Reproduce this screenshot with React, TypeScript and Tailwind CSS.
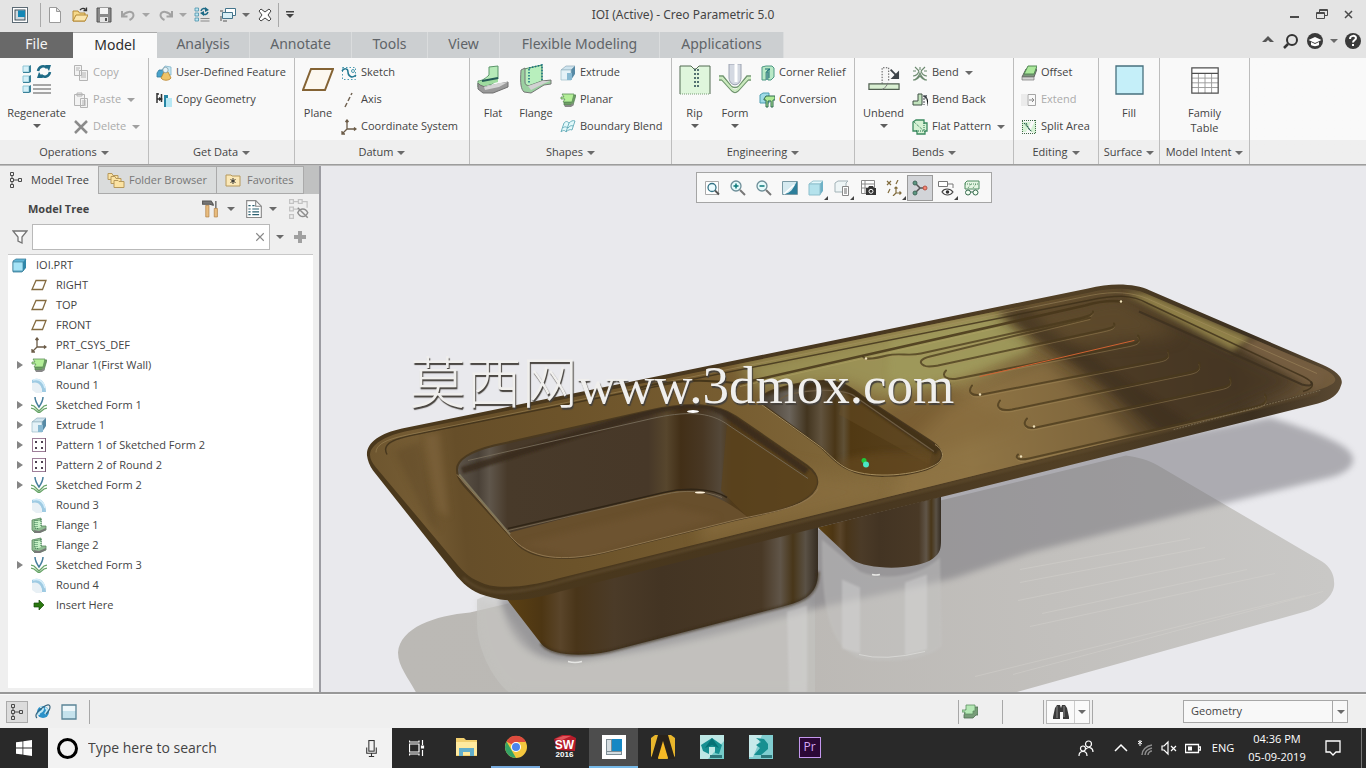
import React from "react";
import type { ReactNode } from "react";

const G = "#4a4a4a";

const art: Record<string, ReactNode> = {
  app: <><rect x=".5" y=".5" width="15" height="15" fill="#fff" stroke="#5c6b75" /><rect x="3" y="3" width="10" height="10" fill="#cfd8dd" stroke="#3c4c56" /><rect x="6" y="3.5" width="7" height="6.5" fill="#1487b5" /></>,
  newDoc: <path d="M2.500.5h7l4 4v11h-11zM9.500.5v4h4" fill="#fff" stroke="#9a9a9a" />,
  open: <><path d="M1 14V4h5l1.500 2H13v8z" fill="#f6d98a" stroke="#b58a35" /><path d="M1 14l3-6h12l-3 6z" fill="#fbe6ae" stroke="#b58a35" /><path d="M8 3c2-2 4-2 5.500-.5M14.500.5v3h-3" fill="none" stroke="#333" strokeWidth="1.300" /></>,
  save: <><path d="M1 1h14v14H1z" fill="#8a8a8a" stroke="#555" /><path d="M4 1h8v6H4z" fill="#f4f4f4" /><path d="M4 10h8v5H4z" fill="#e4e4e4" /><path d="M9 11h2v3H9z" fill="#555" /></>,
  undo: <path d="M2 4v5.500h5.500M2.500 9C5 4.500 13 3 13.500 8c0 3-2 4-4 5" fill="none" stroke="#a2a2a2" strokeWidth="2" />,
  redo: <path d="M14 4v5.500H8.500M13.500 9C11 4.500 3 3 2.500 8c0 3 2 4 4 5" fill="none" stroke="#a2a2a2" strokeWidth="2" />,
  regen: <><g fill="#bfe6f2" stroke="#4a93ab" strokeWidth=".8"><path d="M1 1h3.500v3H1zM1 6h3.500v3H1zM1 11h3.500v3H1z" /></g><path d="M6.500 11.500h9M6.500 14h9" stroke="#888" /><path d="M7 4c1-3 4-3 5-1.500M14 5c-1 3-4 3-5 1.500" fill="none" stroke="#1d6a86" strokeWidth="1.500" /><path d="M11 0l4 3-4 2zM10 4L6 6l4 3z" fill="#1d6a86" /></>,
  windows: <g fill="#fff" stroke="#44758c"><path d="M5.500 1.500h10v7h-10z" /><path d="M2.500 5.500h10v6h-10z" fill="#d9eff6" /><path d="M3 14h4M0 4h3M1 9v5" stroke="#555" /></g>,
  closeWin: <path d="M2 4l2-2 4 3 4-3 2 2-3 4 3 4-2 2-4-3-4 3-2-2 3-4z" fill="#fff" stroke="#444" />,
  regenBig: <><g fill="#d5f0f8" stroke="#8fc6d6"><path d="M2 2h6v6H2zM2 12h6v6H2zM2 22h6v6H2z" /></g><g fill="#3a8199"><path d="M8 2l2-1v7l-2 1zM8 12l2-1v7l-2 1zM8 22l2-1v7l-2 1zM2 8h7l-1 1H2zM2 18h7l-1 1H2zM2 28h7l-1 1H2z" /></g><path d="M12 21h18M12 25h18M12 29h18" stroke="#8a8a8a" strokeWidth="1.500" /><path d="M17 7c1-5 6-6 9-3M29 8c-1 5-6 6-9 3" fill="none" stroke="#1d6a86" strokeWidth="2.500" /><path d="M24 1h6l-2 6zM22 14h-6l2-6z" fill="#1d6a86" /></>,
  copy: <g fill="#f3f3f3" stroke="#b4b4b4"><path d="M1.500.5h7v10h-7zM6.500 5.500h8v10h-8z" /><path d="M3 3h4M3 5h3M8 8h5M8 10h5M8 12h5" /></g>,
  paste: <g fill="#f3f3f3" stroke="#b4b4b4"><path d="M1.500 2.500h10v11h-10zM4 1h5v3H4zM7.500 6.500h7v9h-7z" /><path d="M9 9h4M9 11h4M9 13h4" /></g>,
  del: <path d="M2 2l12 12M14 2L2 14" stroke="#8b8b8b" strokeWidth="2.500" />,
  udf: <><path d="M6 5l3-4 6 1v8H6z" fill="#c8e8f4" stroke="#7fb3c8" strokeWidth=".8" /><path d="M1 8l2-3h5v7H1z" fill="#4aa3cb" stroke="#347c9d" strokeWidth=".8" /><path d="M5 13l3-6h4l3 6c-2 3-8 3-10 0z" fill="#efc468" stroke="#b98328" strokeWidth=".8" /><circle cx="9.500" cy="5" r="2.700" fill="#e8f4f8" stroke="#7d9aa6" strokeWidth=".8" /></>,
  copyGeo: <><path d="M1 1v10M5.500 2v8M1 2h2M1 7h3" stroke="#333" strokeWidth="1.500" fill="none" /><path d="M3 5l4 2-4 2z" fill="#333" /><path d="M8 3h4v4l-2 8H8z" fill="#2786a5" /><path d="M10 6h6v9h-6z" fill="#b7e8f4" /></>,
  planeBig: <path d="M9 5h22l-8 21H1z" fill="#fcf8ef" stroke="#846334" strokeWidth="2" />,
  plane: <path d="M5 3.500h10L11.500 12.500H1z" fill="none" stroke="#846b40" strokeWidth="1.300" />,
  sketch: <><rect x="1.500" y="2.500" width="13" height="12" fill="none" stroke="#4d9bb0" strokeDasharray="1.500 2" /><path d="M1 6c2-3 6-3 6 1s4 7 8 3" stroke="#217791" strokeWidth="1.500" fill="none" /><circle cx="12" cy="6" r="1.500" fill="none" stroke="#4d9bb0" /></>,
  axis: <path d="M4 15l2-4M7 9l2-4M10 3l1-2" stroke="#726352" strokeWidth="1.500" />,
  csys: <g fill="none" stroke="#6b5b47" strokeWidth="1.300"><path d="M6 1v9h9M6 10l-5 5M4.500 3L6 1l1.500 2M13 8.500l2 1.500-2 1.500M1 12v3h3" /></g>,
  flat: <><path d="M1 17c4 0 8-3 11-6V3l9-1v13l-6 5-14 3z" fill="#b6eab8" stroke="#5b956a" /><path d="M4 17l17-3v4L7 22H1v-3z" fill="#9fdb9f" /><path d="M5 17l16-3" stroke="#235b55" strokeWidth="2" /><path d="M1 19v6l5 4h10l15-6v-5l-9 2-14 3-5-2z" fill="#999" stroke="#707070" /><path d="M7 23l15-4 9-1-9 5-14 3z" fill="#d4d4d4" /></>,
  flange: <><path d="M4 5l18-4v16l-14 5-5-3z" fill="#b8efbd" stroke="#579263" /><path d="M1 6l4-2v14c0 4 4 4 7 3l10-4 9-1v4l-7 1-13 8-7-1c-3-3-4-8-3-22z" fill="#9bd0a1" stroke="#767676" /><path d="M8 22l14-5h8l-7 3-12 6z" fill="#d2d2d2" /><path d="M9 5v14M9 4l13-3v15" fill="none" stroke="#147080" strokeWidth="1.500" strokeDasharray="1.500 1.500" /></>,
  extrude: <><path d="M1 5l5-4h9l-4 4z" fill="#cfe4ee" stroke="#8caab9" strokeWidth=".7" /><path d="M11 5l4-4v8l-4 6z" fill="#5689a5" /><path d="M1 5h10v10H1z" fill="#e5f2f8" stroke="#9cbbc9" strokeWidth=".7" /><path d="M7 8h5v7H7z" fill="#88b9d2" /></>,
  planar: <><path d="M13 3h3l-3 10H4v-3h7z" fill="#6f9f66" stroke="#527b50" strokeWidth=".7" /><path d="M2 2h12l-2 8H3l2-3H1V5h3z" fill="#b4ef98" stroke="#5d9158" strokeWidth=".8" /><path d="M12 11l2 2-3 2H5l-1-2h7z" fill="#888" /></>,
  blend: <path d="M1 13L4 4c2-2 3-2 5 0 2-2 4-3 6-2l-3 9c-2-1-4 0-6 2-1-2-3-2-5 0zM9 4l-3 9M3 9c2-2 3-1 5 0 2-2 3-3 5-2" fill="#e1f8fa" stroke="#61a9b7" strokeWidth=".9" />,
  rip: <><path d="M1 2h11l3 3h2l3-3h11v28H1z" fill="#dff6dc" /><path d="M1 30V2h11l3 3h2l3-3h11v28" fill="none" stroke="#536b53" /><path d="M1 30h30" stroke="#789b76" strokeDasharray="1 1" /><path d="M16 5v20M19 5v18" stroke="#26464e" strokeWidth="1.500" strokeDasharray="2 2" /></>,
  form: <><path d="M10 0h12v14c-1 9-11 9-12 0z" fill="#d4d9e2" stroke="#9ba2b0" /><path d="M17 0v18" stroke="#fff" strokeWidth="3" /><path d="M0 12h4l8 10c2 2 6 2 8 0l8-10h4M0 16h3l10 11c2 2 4 2 6 0l10-11h3" fill="none" stroke="#70966e" strokeWidth="1.500" /><path d="M0 14h3l10 11c2 2 4 2 6 0l10-11h3" fill="none" stroke="#caebbd" strokeWidth="2" /></>,
  corner: <><path d="M3 2l4-1h6l2 2v9l-3 3H9V7H7v8H3z" fill="#b9e9c6" stroke="#4d9783" /><path d="M6 4h5l-3 2v9M10 4v9" stroke="#176b73" fill="none" /></>,
  convert: <><path d="M1 3l3-2h6v10H1z" fill="#9fdbe7" stroke="#4c9db0" /><path d="M5 7l2-3h9v4h-2v7h-2V9h-3v6H7V8H5z" fill="#afea95" stroke="#2c6850" /></>,
  unbend: <><path d="M15 20V3h7v14" fill="#f6f6f6" stroke="#484848" strokeDasharray="1.500 1.500" /><path d="M1 20h32v6H1z" fill="#d9efd2" stroke="#505f50" strokeWidth="1.300" /><path d="M15 26c4-2 5-4 6-7" fill="none" stroke="#777" /><path d="M24 5l6 6" stroke="#3d4349" strokeWidth="2" /><path d="M33 6v9h-9z" fill="#3d4349" /></>,
  bend: <path d="M1 15c3 0 6-4 7-7 1 3 4 7 7 7M1 11c3 0 5-2 6-5M15 11c-3 0-5-2-6-5M3 2l4 4M13 2L9 6M1 6h3M12 6h3M8 2v3M3 15c3-1 4-3 5-4 1 1 2 3 5 4" fill="none" stroke="#6d8b70" strokeWidth="1.100" />,
  bendBack: <><path d="M1 9h5V2h4v11H1z" fill="#c2e3bd" stroke="#3f5145" /><path d="M12 3v10M14 5l2 3v6" stroke="#3d4349" strokeDasharray="2 1" /><path d="M11 4l4-1-1 4z" fill="#3d4349" /></>,
  flatPat: <><path d="M1 3l3-2h8v3h3v8h-2v3H5v-3H1z" fill="#d6f2d4" stroke="#3b8a5f" strokeWidth="1.300" /><path d="M2 3l11 10M4 12h7M12 4v7" stroke="#21724c" strokeDasharray="1 1" /></>,
  offset: <><path d="M5 4h11l-3 8H1z" fill="#7b957a" stroke="#656565" /><path d="M1 12h12v3H1z" fill="#d5d5d5" stroke="#777" strokeWidth=".7" /><path d="M7 1h9l-3 8H3z" fill="#abe89b" stroke="#528755" /></>,
  extend: <g fill="none" stroke="#a5a5a5"><path d="M7 2.500h7.500v11H7z" /><path d="M1 2v12M3 2v12M5 2v12" stroke="#ddd" /><path d="M8 8h5M11 6l2 2-2 2" stroke="#888" /></g>,
  split: <><path d="M1 3h9L5 13H1z" fill="#d6f2d5" /><path d="M14 2L9 12l6 3V1z" fill="#d6f2d5" /><path d="M1.500 2v13M14.500 1v14M1 1.500h14M1 14.500h14" stroke="#416849" strokeDasharray="1 1" /><path d="M3 4l8 9M5 4l4 8" stroke="#14503b" strokeDasharray="2 1" /></>,
  fill: <path d="M3 2h27v28H3z" fill="#c5eff9" stroke="#47707e" strokeWidth="1.300" />,
  family: <><path d="M3 3h28v27H3z" fill="#fff" /><path d="M3 14h28M3 19h28M3 24h28M10 9v21M17 9v21M24 9v21" stroke="#9a9a9a" /><path d="M3 3h28v27H3zM3 9h28" fill="none" stroke="#4f4f4f" strokeWidth="1.300" /></>,
  tree: <g fill="none" stroke="#4b4b4b"><path d="M2.500.5h3v3h-3zM2.500 6.500h3v3h-3zM2.500 12.500h3v3h-3zM10.500 6.500h3v3h-3zM4 3.500v3M4 9.500v3M5.500 8h5" /></g>,
  folders: <g fill="#fbe3a3" stroke="#b6985b"><path d="M1 8V2h4l1 2h5v4z" /><path d="M4 12V5h4l1 2h5v5z" /><path d="M7 16V9h4l1 1h5v6z" /></g>,
  fav: <><path d="M1 14V3h5l1 1h8v10z" fill="#fbe8b7" stroke="#b6985b" /><path d="M8 6v6M5.500 7.500l5 3M5.500 10.500l5-3" stroke="#333" /></>,
  hammer: <><path d="M4 5h3v11H4z" fill="#e9bd7f" stroke="#b38246" strokeWidth=".7" /><path d="M1 1h8l2 3v1L8 4H1z" fill="#777" stroke="#555" /><path d="M13.500 1v7" stroke="#777" strokeWidth="1.500" /><path d="M12 8h3v8h-3z" fill="#e9bd7f" stroke="#b38246" strokeWidth=".7" /></>,
  page: <><path d="M1.500.5h8l5 5v10h-13z" fill="#fff" stroke="#888" /><path d="M9.500.5v5h5" fill="none" stroke="#888" /><path d="M3 5h2M6.500 5h2M3 8h2M6.500 8h6M3 10.500h2M6.500 10.500h6M3 13h2M6.500 13h6" stroke="#2b6070" /></>,
  treeOff: <g fill="none" stroke="#c3c3c3"><path d="M.5.5h3v3h-3zM.5 6.500h3v3h-3zM.5 12.500h3v3h-3zM7.500.5h3v3h-3zM3.500 2h4M3.500 8h4M10.500 2h4v5" /><path d="M7 11c2-4 6-4 8 0-2 4-6 4-8 0zM7 7l8 8" stroke="#8d8d8d" strokeWidth="1.200" /></g>,
  filter: <path d="M1 2h14l-5 6v6l-4-2V8z" fill="#fafafa" stroke="#747474" strokeWidth="1.300" />,
  part: <><path d="M2 4l3-2h10l-2 3v8l-2 2H2z" fill="#5fb5d6" stroke="#3c7e99" strokeWidth=".8" /><path d="M2 5h10v9H2z" fill="#a5e4f7" stroke="#3c7e99" strokeWidth=".7" /><path d="M12 5l3-3v9l-3 3z" fill="#3088aa" /></>,
  round: <><path d="M1 7V3c8-4 14 2 14 12h-4C11 9 8 6 1 7z" fill="#9fcbe3" /><path d="M1 6c6-2 10 2 10 10H5l-4-3z" fill="#e8f0f5" /><path d="M2 3c8-2 11 4 12 8" fill="none" stroke="#d6eefa" strokeWidth="1.500" /></>,
  sform: <g fill="none"><path d="M4 0c0 4 2 7 4 10 2-3 4-6 4-10" stroke="#457d9c" strokeWidth="1.500" /><path d="M0 8l3 1 5 5 5-5 3-1M0 11l3 1 5 4 5-4 3-1" stroke="#65a365" strokeWidth="1.300" /></g>,
  pattern: <><rect x="1.500" y="1.500" width="13" height="13" fill="#fff" stroke="#9e7e99" /><path d="M14.500 1v14" stroke="#765c73" /><path d="M4 4h2v2H4zM10 4h2v2h-2zM4 10h2v2H4zM10 10h2v2h-2z" fill="#4f4052" /></>,
  sflange: <><path d="M1 3l9-2v8h5v4l-5 2-6 1-3-3z" fill="#8fbd92" stroke="#5c8a61" strokeWidth=".8" /><path d="M4 4h6v6l-2 1H4z" fill="#c6f0c5" /><path d="M4 3v8l4 1M6 3v7M10 2v8" stroke="#35784c" strokeDasharray="1 1" fill="none" /><path d="M2 13l6 1 7-3v2l-6 3H4z" fill="#777" /></>,
  insert: <path d="M3 6h5V3l5 5-5 5v-3H3z" fill="#2a780f" stroke="#174a0d" strokeWidth=".7" />,
  zfit: <><path d="M1.500 1.500h13v13h-13z" fill="#fff" stroke="#aaa" /><circle cx="8" cy="7.500" r="4" fill="#edfcff" stroke="#347386" strokeWidth="1.300" /><path d="M11 10.500l4 4" stroke="#555" strokeWidth="1.800" /></>,
  zin: <><circle cx="6" cy="6" r="5" fill="#e5fafb" stroke="#6e8f99" strokeWidth="1.300" /><path d="M6 3.500v5M3.500 6h5" stroke="#087779" strokeWidth="1.500" /><path d="M10 10l5 5" stroke="#777" strokeWidth="2" /></>,
  zout: <><circle cx="6" cy="6" r="5" fill="#e5fafb" stroke="#6e8f99" strokeWidth="1.300" /><path d="M3.500 6h5" stroke="#087779" strokeWidth="1.500" /><path d="M10 10l5 5" stroke="#777" strokeWidth="2" /></>,
  repaint: <><path d="M.5 1.500h15v13H.5z" fill="#d6eaf0" stroke="#7a9aa5" /><path d="M15 1v13H2C9 13 11 9 15 1z" fill="#2d7f9b" /><path d="M2 14L12 5" stroke="#fff" strokeWidth="1.500" /></>,
  cube: <><path d="M1 4l4-3h10l-3 3z" fill="#e3f8fc" stroke="#9cc6d0" /><path d="M12 4l3-3v10l-3 4z" fill="#6eb1c6" /><path d="M1 4h11v11H1z" fill="#b4e2ec" stroke="#8dbfcd" /></>,
  views: <><path d="M1 3l3-2h10l-2 2v9H1z" fill="#eef5f6" stroke="#a3b3b8" /><path d="M8.500 6.500h6v9h-6z" fill="#fff" stroke="#888" /><path d="M10 9h3M10 11h3M10 13h3" stroke="#666" /></>,
  camera: <><path d="M1.500.5h13v13h-13zM1 4h14M1 8h14M5 1v12" fill="#fff" stroke="#888" /><path d="M6 8h2l1-2h4l1 2h2v7H6z" fill="#333" /><circle cx="11" cy="11.300" r="2" fill="#333" stroke="#fff" /></>,
  datum: <g stroke="#806b3c" fill="none" strokeWidth="1.200"><path d="M1 1l4 4M5 1L1 5M12 0l-2 4M4 9l-2 4M10 7v6h5M10 13l-3 3M8.500 8.500L10 7l1.500 1.500M13.500 11.500L15 13l-1.500 1.500" /></g>,
  spin: <><path d="M3 3l5 5-5 5M8 8h5" fill="none" stroke="#555" strokeWidth="1.500" /><circle cx="3" cy="3" r="2" fill="#5c9781" stroke="#42685b" /><circle cx="3" cy="13" r="2" fill="#5c9781" stroke="#42685b" /><circle cx="13" cy="8" r="2" fill="#f58372" stroke="#b35548" /></>,
  annot: <><path d="M.5 1.500h9v5h-9zM10 4h5v4" fill="#fff" stroke="#777" /><path d="M4 12c2-4 8-4 11 0-3 4-8 4-11 0z" fill="#fff" stroke="#444" strokeWidth="1.200" /><circle cx="9.500" cy="12" r="1.800" fill="#333" /></>,
  flatPrev: <><path d="M1 3l2-2h12v8H1z" fill="#e5f5e3" stroke="#4f8c60" /><path d="M1 4h14M4 8l3-4M9 8l3-4" stroke="#4f8c60" strokeDasharray="1 1" /><circle cx="4" cy="12.500" r="2.500" fill="#f4fff3" stroke="#33684b" /><circle cx="11.500" cy="12.500" r="2.500" fill="#f4fff3" stroke="#33684b" /><path d="M6 12h3" stroke="#33684b" /></>,
  globe: <><circle cx="8" cy="8" r="6" fill="#2b91c9" /><path d="M5 3c3 0 4 2 2 4s-4 1-3 4M10 4c4 1 1 4 0 6" stroke="#bfe8f5" strokeWidth="2" fill="none" /><path d="M2 14C-1 11 3 7 7 4c5-4 8-4 8-1 0 2-2 5-4 7" fill="none" stroke="#36657e" strokeWidth="1.200" /></>,
  square: <><path d="M1 1h14v14H1z" fill="#eef7fa" /><path d="M1 7h14v8H1z" fill="#c5e2ec" /><path d="M1 1h14v14H1z" fill="none" stroke="#5a8496" strokeWidth="1.300" /></>,
  layers: <><path d="M5 3h11v8h-2l-3 3H2v-3z" fill="#789c79" stroke="#506f54" strokeWidth=".8" /><path d="M4 1h9v6h-2v3H3V8H0V6h4z" fill="#b5e8b5" stroke="#5d9162" strokeWidth=".8" /></>,
  bino: <><path d="M2 4l2-3h3l1 3 1-3h3l2 3 2 9v2h-6V8H7v7H0v-2z" fill="#3b3b3b" /><path d="M4 2v12M11 2v11" stroke="#8a8a8a" /></>,
  win: <path d="M0 2.300l6.500-.9v6H0zM7.300 1.300L16 0v7.400H7.300zM0 8.500h6.500v6L0 13.700zM7.300 8.500H16V16l-8.700-1.200z" fill="#fff" />,
  mic: <g fill="none" stroke="#333"><rect x="5.500" y=".5" width="5" height="10" /><path d="M3.500 7v5.500h9V7M8 12.500v3M5.500 15.500h5" /></g>,
  taskview: <g fill="none" stroke="#fff" strokeWidth="1.200"><path d="M.5 4h9.500v8H.5zM.5.500V2h9.500V.5M.5 15.500V14h9.500v1.500M13.500 0v5M13.500 10v6" /><path d="M12.500 6h2v2h-2z" fill="#fff" /></g>,
  explorer: <><path d="M1 3h8l2 2h11v16H1z" fill="#f2d070" /><path d="M1 7h21v13H1z" fill="#ffea9f" /><path d="M4 21v-8h15v8h-4v-4H8v4z" fill="#62aecb" /></>,
  chrome: <><circle cx="12" cy="12" r="11" fill="#f4c63e" /><path d="M12 12L2.500 6.500A11 11 0 0 1 22 7H12z" fill="#dd4b3e" /><path d="M2.500 6.500L8 16l4 7A11 11 0 0 1 2.500 6.500z" fill="#35a366" /><circle cx="12" cy="12" r="5" fill="#fff" /><circle cx="12" cy="12" r="4" fill="#4c85ed" /></>,
  sw: <><path d="M1 4l8-4h8l6 3-1 13-18-1z" fill="#b71c2a" /><path d="M2 4l8-3h8L9 5z" fill="#e0565c" /></>,
  creo: <><path d="M0 0h24v24H0z" fill="#fff" /><path d="M4 4h16v16H4z" fill="#7d8c94" /><path d="M5 5h4v11H5zM5 17h14v2H5z" fill="#d5dde1" /><path d="M10 4h10v12H10z" fill="#1688c4" /></>,
  ansys: <><path d="M4 0h16l4 3v18l-2 3H2l-2-3V3z" fill="#e8b62c" /><path d="M7 0h10l7 24h-7L12 9 7 24H0z" fill="#28221b" /><path d="M12 6l5 17H7z" fill="#f7ba25" /></>,
  max: <><path d="M0 0h24v24H0z" fill="#75cbc9" /><path d="M0 0h24v6L8 24H0z" fill="#bde7e5" /><path d="M12 3l10 7-3 9-4-1v-6H9v7l-6-3-2-6z" fill="#168f91" /><path d="M12 3L5 13l7-3 7 3z" fill="#057276" /><path d="M10 20h12v3H10z" fill="#2e777a" /></>,
  maya: <><path d="M0 0h24v24H0z" fill="#80cdd0" /><path d="M0 0h13L4 22H0z" fill="#c6e9ea" /><path d="M7 3l8 1 4 5v5l-7 6H5l6-7-4-3 5-3z" fill="#168f91" /><path d="M12 20h11v3H12z" fill="#2e777a" /></>,
  people: <g fill="none" stroke="#fff" strokeWidth="1.200"><circle cx="10.500" cy="4" r="3" /><circle cx="5" cy="8.500" r="2.500" /><path d="M1 16c0-6 8-6 8 0M8 9c3-3 7-1 7 3" /></g>,
  up: <path d="M2 11l6-6 6 6" fill="none" stroke="#fff" strokeWidth="1.500" />,
  wifi: <><g fill="none" stroke="#8d8d8d" strokeWidth="1.500"><path d="M5 15c0-5 4-9 10-10M8 15c0-4 3-6 7-7M11 15c0-2 2-4 4-4" /></g><path d="M1 4l4-3M1 1l4 3M3 0v6" stroke="#fff" /></>,
  mute: <><path d="M1 6h2l4-4v12l-4-4H1z" fill="none" stroke="#fff" strokeWidth="1.200" /><path d="M10 6l5 5M15 6l-5 5" stroke="#fff" strokeWidth="1.200" /></>,
  battery: <><path d="M.5 4.500h13v8H.5zM14 7h1.500v3H14" fill="none" stroke="#fff" strokeWidth="1.300" /><path d="M3 6.500h4v4H3z" fill="#fff" /></>,
  note: <path d="M1 1h14v11h-4l-3 3-3-3H1z" fill="none" stroke="#fff" strokeWidth="1.300" />,
  min: <path d="M3 10h9" stroke={G} strokeWidth="2" />,
  restore: <path d="M2.500 5.500h8v6h-8zM5.500 5.500v-3h8v6h-3M3 6.500h8M5.500 3.500h8" fill="none" stroke={G} />,
  x: <path d="M4 4l7 7M11 4l-7 7" stroke={G} strokeWidth="1.500" />,
  collapse: <path d="M2 9l6-6 6 6h-4L8 7 6 9z" fill="#555" />,
  find: <><circle cx="9" cy="7" r="5" fill="none" stroke="#333" strokeWidth="2" /><path d="M5 11l-4 4" stroke="#333" strokeWidth="2.500" /></>,
  learn: <><circle cx="8" cy="8" r="8" fill="#3a3a3a" /><path d="M1.500 7L8 4l6.500 3L8 10z" fill="#fff" /><path d="M4 9v3c2 1.500 6 1.500 8 0V9l-4 2z" fill="#fff" /></>,
  help: <><circle cx="8" cy="8" r="8" fill="#3a3a3a" /><path d="M5 6c0-4 6-4 6-1 0 2-3 2-3 4.500M8 11v2" fill="none" stroke="#fff" strokeWidth="2" /></>,
  plus: <path d="M6 2h4v4h4v4h-4v4H6v-4H2V6h4z" fill="#a0a0a0" />,
};

const boxes: Record<string, string> = {
  regenBig: "0 0 32 32", planeBig: "0 0 32 32", flat: "0 0 32 32", flange: "0 0 32 32", rip: "0 0 32 32", form: "0 0 32 32",
  unbend: "0 0 34 32", fill: "0 0 32 32", family: "0 0 34 32", explorer: "0 0 24 24", chrome: "0 0 24 24", sw: "0 0 24 24",
  creo: "0 0 24 24", ansys: "0 0 24 24", max: "0 0 24 24", maya: "0 0 24 24", folders: "0 0 18 17", hammer: "0 0 16 17",
};

function Icon({ name, className = "size-4" }: { name: string; className?: string }) {
  return <svg viewBox={boxes[name] ?? "0 0 16 16"} className={`${className} shrink-0`} aria-hidden="true">{art[name]}</svg>;
}

function Caret({ className = "text-[#6a6a6a]" }: { className?: string }) {
  return <svg viewBox="0 0 8 4" className={`h-1 w-2 shrink-0 ${className}`} aria-hidden="true"><path d="M0 0h8L4 4z" fill="currentColor" /></svg>;
}

function Group({ title, width, children }: { title: string; width: string; children: ReactNode }) {
  return (
    <section className={`flex shrink-0 flex-col border-r border-[#bdbdbd] ${width}`}>
      <div className="flex h-[82px] bg-[#f9f9f9] pt-px">{children}</div>
      <button className="flex h-6 items-center justify-center gap-1 bg-[#efefef] pt-px whitespace-nowrap">{title}<Caret /></button>
    </section>
  );
}

function Big({ icon, label, caret, width }: { icon: string; label: string; caret?: boolean; width: string }) {
  return (
    <button className={`flex shrink-0 flex-col items-center pt-[5px] ${width}`}>
      <Icon name={icon} className="size-8" />
      <span className="mt-[9px] leading-[15px]">{label}</span>
      {caret && <Caret className="mt-1 text-[#5e5e5e]" />}
    </button>
  );
}

function Small({ icon, label, caret, off }: { icon: string; label: string; caret?: boolean; off?: boolean }) {
  return (
    <button disabled={off} className={`flex h-[27px] items-center gap-1 whitespace-nowrap ${off ? "text-[#ababab]" : ""}`}>
      <Icon name={icon} />{label}
      {caret && <Caret className={off ? "ml-0.5 text-[#a0a0a0]" : "ml-0.5 text-[#6a6a6a]"} />}
    </button>
  );
}

const tabs = [
  ["Analysis", "w-[93px]"], ["Annotate", "w-[102px]"], ["Tools", "w-[76px]"], ["View", "w-[72px]"],
  ["Flexible Modeling", "w-[160px]"], ["Applications", "w-[124px]"],
];

const treeRows: [string, string, boolean][] = [
  ["plane", "RIGHT", false], ["plane", "TOP", false], ["plane", "FRONT", false], ["csys", "PRT_CSYS_DEF", false],
  ["planar", "Planar 1(First Wall)", true], ["round", "Round 1", false], ["sform", "Sketched Form 1", true],
  ["extrude", "Extrude 1", true], ["pattern", "Pattern 1 of Sketched Form 2", true], ["pattern", "Pattern 2 of Round 2", true],
  ["sform", "Sketched Form 2", true], ["round", "Round 3", false], ["sflange", "Flange 1", false], ["sflange", "Flange 2", false],
  ["sform", "Sketched Form 3", true], ["round", "Round 4", false], ["insert", "Insert Here", false],
];

const viewTools: [string, string, boolean][] = [
  ["zfit", "Refit", false], ["zin", "Zoom in", false], ["zout", "Zoom out", false], ["repaint", "Repaint", false],
  ["cube", "Display style", true], ["views", "Saved orientations", true], ["camera", "View manager", false],
  ["datum", "Datum display filters", true], ["spin", "Spin center", false], ["annot", "Annotation display", true], ["flatPrev", "Flat pattern preview", false],
];

const grooves = [
  "M863 357c2 4 12 2 24-1s22 1 34-2L1070 321c15-3 24-6 23-9",
  "M1090 318L930 357c-9 2-12 6-6 9 3 2 8 1 14 0L1096 332c14-3 20-4 18-8",
  "M946 371c-6 6 2 10 12 8L1130 345c9-2 11-4 8-9",
  "M972 386c-5 7 0 11 10 9L1158 361c10-2 12-4 10-10",
  "M1000 401c-5 7 0 11 12 9L1190 373c9-2 11-5 9-10",
  "M1027 419c-5 6-1 11 9 9L1222 388c9-2 10-5 8-10",
  "M1018 455c-4 4 2 6 11 4L1256 407c9-2 12-6 9-12",
];

function Sink() {
  const plate = "M367 456C366 443 380 434 402 429L1088 289C1112 283 1135 284 1150 291L1322 365C1339 372 1344 380 1341 386C1338 396 1331 400 1318 404L560 592C530 601 508 603 492 598C474 594 466 587 457 577L373 471Q368 464 367 456Z";
  const top = "M370 455C371 445 384 437 405 432L1090 293C1112 288 1132 288 1146 294L1318 367C1333 373 1338 379 1334 383C1330 387 1320 390 1306 394L558 579C530 587 506 589 490 586C475 582 467 576 459 567L376 468Q370 461 370 455Z";
  const bowl = "M457 471C456 459 474 451 494 446L650 411C690 402 716 404 736 417L807 466C823 478 820 492 800 502C783 511 760 515 737 520L604 553C568 562 535 560 519 546L464 486Q457 478 457 471Z";
  const bowl2 = "M760 403C758 392 786 386 813 382C842 379 850 388 864 398L933 443C947 453 944 463 926 470C901 478 865 479 849 470C835 464 829 454 820 447Z";
  return (
    <svg viewBox="321 166 1045 527" preserveAspectRatio="xMidYMid slice" className="absolute inset-0 h-full w-full" role="img" aria-label="Sink model">
      <defs>
        <linearGradient id="brass" gradientUnits="userSpaceOnUse" x1="370" y1="460" x2="1330" y2="360">
          <stop offset="0" stopColor="#6e562f" /><stop offset=".05" stopColor="#755c34" /><stop offset=".09" stopColor="#664e29" /><stop offset=".2" stopColor="#6c532a" /><stop offset=".38" stopColor="#775d31" /><stop offset=".5" stopColor="#81683a" /><stop offset=".62" stopColor="#8a7143" /><stop offset=".74" stopColor="#6c5633" /><stop offset=".9" stopColor="#493b28" /><stop offset="1" stopColor="#735c3d" />
        </linearGradient>
        <linearGradient id="wall" gradientUnits="userSpaceOnUse" x1="457" y1="0" x2="818" y2="0">
          <stop offset="0" stopColor="#5d5449" /><stop offset=".06" stopColor="#4a4137" /><stop offset=".09" stopColor="#5f564b" /><stop offset=".14" stopColor="#483a2a" /><stop offset=".53" stopColor="#473828" /><stop offset=".58" stopColor="#57462d" /><stop offset=".62" stopColor="#422f17" /><stop offset=".68" stopColor="#483723" /><stop offset=".73" stopColor="#544839" /><stop offset=".76" stopColor="#503a1a" /><stop offset="1" stopColor="#5c4420" />
        </linearGradient>
        <linearGradient id="body" x1="0" y1="0" x2="1" y2="0">
          <stop offset="0" stopColor="#5d4214" /><stop offset=".12" stopColor="#4d3613" /><stop offset=".18" stopColor="#5a452a" /><stop offset=".23" stopColor="#493519" /><stop offset=".35" stopColor="#4b3b28" /><stop offset=".5" stopColor="#433423" /><stop offset=".82" stopColor="#493926" /><stop offset=".88" stopColor="#605548" /><stop offset=".92" stopColor="#483619" /><stop offset=".96" stopColor="#5a5145" /><stop offset="1" stopColor="#352c21" />
        </linearGradient>
        <linearGradient id="wall2" gradientUnits="userSpaceOnUse" x1="765" y1="0" x2="940" y2="0">
          <stop offset="0" stopColor="#4c4236" /><stop offset=".14" stopColor="#6b645b" /><stop offset=".24" stopColor="#43351f" /><stop offset=".32" stopColor="#61533e" /><stop offset=".4" stopColor="#4a3617" /><stop offset=".45" stopColor="#5f5036" /><stop offset=".49" stopColor="#513913" /><stop offset="1" stopColor="#594321" />
        </linearGradient>
        <linearGradient id="ghost" gradientUnits="userSpaceOnUse" x1="400" y1="660" x2="1330" y2="580"><stop offset="0" stopColor="#bbb9b5" /><stop offset=".4" stopColor="#bbb8b4" /><stop offset="1" stopColor="#c9c8c6" /></linearGradient>
        <linearGradient id="lip" gradientUnits="userSpaceOnUse" x1="460" y1="0" x2="1340" y2="0"><stop offset="0" stopColor="#4a381c" /><stop offset=".45" stopColor="#47361f" /><stop offset=".7" stopColor="#524025" /><stop offset=".9" stopColor="#3c3020" /><stop offset="1" stopColor="#5a4932" /></linearGradient>
        <clipPath id="topClip"><path d={top} /></clipPath><clipPath id="bowlClip"><path d={bowl} /></clipPath><clipPath id="bowl2Clip"><path d={bowl2} /></clipPath>
        <filter id="b1" x="-30%" y="-30%" width="160%" height="160%"><feGaussianBlur stdDeviation="1" /></filter>
        <filter id="b2" x="-30%" y="-30%" width="160%" height="160%"><feGaussianBlur stdDeviation="3" /></filter>
        <filter id="b5" x="-30%" y="-30%" width="160%" height="160%"><feGaussianBlur stdDeviation="8" /></filter>
      </defs>
      <rect x="321" y="166" width="1045" height="527" fill="#e9e9ed" />
      <path d="M470 613C435 616 400 628 398 653C398 668 410 680 417 695H1008L1302 613C1323 608 1336 594 1334 582C1334 575 1330 567 1322 562L1158 466C1148 460 1138 458 1126 456L800 535Z" fill="url(#ghost)" />
      <path d="M477 600v24c0 30 20 60 32 69h306V580L500 590z" fill="#c5c4c2" opacity=".6" />
      <path d="M500 600c10 50 40 68 85 61 90-12 165-34 235-53L953 579 1030 553 1220 505 1330 478C1350 473 1358 462 1350 453C1343 443 1310 430 1270 418L940 480 800 520Z" fill="#77767d" opacity=".53" filter="url(#b2)" />
      <path d="M480 600l20 6 30 40c10 14 40 19 70 12l210-56v88H515c-30-12-38-64-38-93z" fill="#c4c2bf" opacity=".35" filter="url(#b2)" />
      <path d="M822 540l38 32c24 10 60 5 80-14l2 88c-10 14-60 20-85 12-20-12-36-28-35-118z" fill="#c6c6c5" opacity=".4" filter="url(#b1)" />
      <path d="M842 580l18 8v66l-18-5zM905 583l22-8v75l-22 6zM787 612l20-6v87h-18z" fill="#dadada" opacity=".4" filter="url(#b1)" />
      <path d="M859 655q25 7 66-3" fill="none" stroke="#dcdcda" opacity=".8" />
      <path d="M568 662q7 2 14 0M872 575q4 1 8 0" fill="none" stroke="#e6e6e4" strokeWidth="1.500" />
      <g stroke="#d4d2cf" opacity=".45" fill="none"><path d="M1020 570l170-31M1020 583l185-35M1018 601l207-42M1042 614l205-44M1030 627l245-53M1305 596l-330 81M1323 592l-310 83" /></g>
      <path d="M504 596l37 48c10 12 38 14 68 8l174-45c20-5 36-12 35-35v-49z" fill="url(#body)" />
      <path d="M541 644c10 12 38 14 68 8l174-45c20-5 36-12 35-35" fill="none" stroke="#372a18" strokeWidth="3" opacity=".6" filter="url(#b1)" />
      <path d="M818 528l34 32c16 11 65 11 81-1 7-5 8-10 8-18v-44z" fill="url(#body)" />
      <path d={plate} fill="url(#lip)" />
      <path d="M463 578c13 12 28 17 49 14 20-1 42-8 60-13L1318 393" fill="none" stroke="#5e4b2e" strokeWidth="3" opacity=".7" filter="url(#b1)" />
      <path d={top} fill="url(#brass)" />
      <g clipPath="url(#topClip)">
        <path d="M700 450C820 470 900 500 1000 470L700 545z" fill="#8c7142" opacity=".6" filter="url(#b5)" />
        <path d="M735 365L998 310l42 38L960 384l-70 16-48-16-80 4z" fill="#a39f5e" opacity=".75" filter="url(#b5)" />
        <path d="M890 340l106-24 36 34-104 36-40-8z" fill="#a3a061" opacity=".45" filter="url(#b2)" />
        <path d="M880 405l70-16 70 36-120 40z" fill="#74592f" opacity=".6" filter="url(#b5)" />
        <path d="M950 405l95-45 95 85-250 75 15-70z" fill="#967a49" opacity=".5" filter="url(#b5)" />
        <path d="M998 314l125-20 180 88-140 62-55-55z" fill="#443623" opacity=".75" filter="url(#b5)" />
        <path d="M998 312l28-5 80 60 90 60-28 10-92-72z" fill="#392c1b" opacity=".45" filter="url(#b2)" />
        <path d="M1020 316l100-20 60 40-110 10z" fill="#6a5433" opacity=".55" filter="url(#b5)" />
        <path d="M1125 293l24 2 103 44-20 12z" fill="#9c8d50" opacity=".85" filter="url(#b2)" />
        <path d="M1240 348l20-12 72 36-16 17z" fill="#745d3f" filter="url(#b2)" />
        <path d="M395 452l25-10 20 90-12-10z" fill="#5d4725" opacity=".4" filter="url(#b2)" />
        <path d="M425 436l14-3 10 85-12-8z" fill="#8c7048" opacity=".35" filter="url(#b2)" />
        <path d="M387 455C380 442 400 438 425 433L1088 301c30-6 44-6 60 3l155 73c12 6 13 11 0 15" fill="none" stroke="#3d2f19" strokeWidth="1.500" opacity=".8" />
        <path d="M376 453c0-9 13-14 34-18L1090 296c25-5 42-3 57 3l170 75" fill="none" stroke="#ab9566" opacity=".45" />
        <path d="M740 384L1085 306q20-6 38-4" stroke="#46361a" strokeWidth="2.500" fill="none" opacity=".85" />
        <path d="M740 387L1000 328" stroke="#b3a468" fill="none" opacity=".5" />
        <path d="M1139 312l163 73q12 3 9-3" stroke="#3e3120" strokeWidth="2" fill="none" opacity=".85" />
        <path d="M640 388c30-8 70-8 100-4" stroke="#46361a" strokeWidth="2" fill="none" />
      </g>
      <g fill="none" strokeLinecap="round">
        {grooves.map((d) => <g key={d}><path d={d} stroke="#a9925f" strokeWidth="1" opacity=".4" transform="translate(0 2)" /><path d={d} stroke="#4a3a1c" strokeWidth="2" opacity=".75" /></g>)}
        <path d="M980 377L1134 341" stroke="#d06231" />
        <path d="M1174 430L1320 391" stroke="#796b52" strokeDasharray="1 2" />
      </g>
      <path d={bowl} fill="url(#wall)" stroke="#4b3a20" strokeWidth="2" />
      <g clipPath="url(#bowlClip)">
        <path d="M498 536L660 494c35-8 63 2 93 28v60H490z" fill="#684f2c" />
        <path d="M520 545l150-38 50 12-140 40z" fill="#735835" opacity=".5" filter="url(#b2)" />
        <path d="M727 425l94 54v32l-70 10-30-30z" fill="#5c441e" opacity=".75" />
        <path d="M460 476L652 416c32-8 58-9 75 6l78 55" transform="translate(2 -5)" fill="none" stroke="#37291a" strokeWidth="7" opacity=".8" filter="url(#b1)" />
        <path d="M468 461L652 419c32-7 57-8 77 7l79 53" fill="none" stroke="#776c5a" opacity=".9" />
        <path d="M508 529L664 493c20-5 47-5 63 5" fill="none" stroke="#302516" strokeWidth="1.500" />
        <path d="M508 531L664 495c20-5 42-4 58 3" fill="none" stroke="#85765d" opacity=".7" />
        <path d="M459 475L510 535" stroke="#7f765b" strokeWidth="2" />
      </g>
      <path d="M457 475l52 60c20 26 55 27 95 18L737 520c33-7 73-13 81-31" fill="none" stroke="#8f7650" />
      <ellipse cx="693" cy="412" rx="6" ry="1.500" fill="#fff" /><ellipse cx="700" cy="493" rx="5" ry="1" fill="#fff2dc" />
      <path d={bowl2} fill="url(#wall2)" stroke="#4b3a20" strokeWidth="2" />
      <g clipPath="url(#bowl2Clip)">
        <path d="M845 390l88 60-4 15-90-50z" fill="#6a5028" opacity=".4" />
        <path d="M764 394c20-10 70-14 84-4l90 62" fill="none" stroke="#3d2e18" strokeWidth="8" opacity=".75" filter="url(#b1)" />
        <path d="M780 400c10-10 64-13 75-3l79 55" fill="none" stroke="#6d5c43" strokeWidth="1.300" />
        <path d="M836 462q40-14 95-7v30h-90z" fill="#674c21" opacity=".6" filter="url(#b2)" />
      </g>
      <path d="M760 404l60 43c9 7 16 17 29 23 25 10 67 5 83-3 14-6 13-16 3-22" fill="none" stroke="#a58d5e" />
      <circle cx="864" cy="461" r="2.500" fill="#20c838" /><circle cx="866" cy="465" r="3" fill="#4be8c4" />
      {[[1021, 457], [1034, 427], [980, 395], [866, 359], [1121, 302]].map(([x, y]) => <circle key={x} cx={x} cy={y} r="1.200" fill="#f1e3bc" />)}
    </svg>
  );
}

function Cell({ name, label, width, children }: { name?: string; label: string; width: string; children?: ReactNode }) {
  return <button aria-label={label} className={`flex h-full shrink-0 items-center justify-center ${width}`}>{name ? <Icon name={name} /> : children}</button>;
}

function TaskApp({ name, label, state = "" }: { name: string; label: string; state?: string }) {
  return (
    <button aria-label={label} className={`relative flex w-[49px] shrink-0 items-center justify-center border-b-2 ${state || "border-transparent"}`}>
      <Icon name={name} className="size-6" />
      {name === "sw" && <span className="absolute flex flex-col items-center pt-1 font-['Liberation_Sans'] font-bold text-white"><span className="text-xs leading-[11px]">SW</span><span className="text-[8px] leading-[8px]">2016</span></span>}
    </button>
  );
}

export default function App() {
  return (
    <div className="flex min-h-screen w-full flex-col overflow-hidden bg-[#efefef] font-['Open_Sans','Noto_Sans',sans-serif] text-[11px] text-[#444]">
      <header className="bg-[#e4e4e4]">
        <div className="grid h-8 grid-cols-[1fr_auto_1fr] items-start">
          <div className="flex h-[29px] items-center">
            <Cell name="app" label="Window" width="w-10" />
            <span className="h-6 w-px bg-[#a9a9a9]" />
            <Cell name="newDoc" label="New" width="w-[27px]" /><Cell name="open" label="Open" width="w-6" /><Cell name="save" label="Save" width="w-6" />
            <Cell name="undo" label="Undo" width="w-6" /><Cell label="Undo list" width="w-3"><Caret className="text-[#a5a5a5]" /></Cell>
            <Cell name="redo" label="Redo" width="w-[27px]" /><Cell label="Redo list" width="w-2"><Caret className="text-[#a5a5a5]" /></Cell>
            <Cell name="regen" label="Regenerate model" width="w-[29px]" /><Cell name="windows" label="Windows" width="w-6" /><Cell label="Window list" width="w-3"><Caret /></Cell>
            <Cell name="closeWin" label="Close window" width="w-[26px]" />
            <span className="h-6 w-px bg-[#a9a9a9]" />
            <Cell label="Customize toolbar" width="w-[22px]"><svg viewBox="0 0 8 8" className="size-2"><path d="M0 0h8v1.500H0zM0 3h8L4 7z" fill="#444" /></svg></Cell>
          </div>
          <h1 className="font-['Noto_Sans',sans-serif] text-xs leading-[29px]">IOI (Active) - Creo Parametric 5.0</h1>
          <div className="flex h-[29px] items-center justify-end pr-1">
            <Cell name="min" label="Minimize" width="w-[27px]" /><Cell name="restore" label="Restore" width="w-[27px]" /><Cell name="x" label="Close" width="w-[27px]" />
          </div>
        </div>
        <div className="flex h-[26px] items-stretch font-['Noto_Sans',sans-serif]">
          <button className="w-[73px] shrink-0 bg-[#696969] pb-0.5 text-sm text-[#f5f5f5]">File</button>
          <nav className="flex text-sm text-[#606468]">
            <button className="w-[84px] border-t border-[#aaa] bg-[#fafafa] pb-0.5 text-[#2e2e2e]">Model</button>
            {tabs.map(([name, w]) => <button key={name} className={`border-r border-[#dadcdd] bg-[#cccfd1] pb-0.5 whitespace-nowrap ${w}`}>{name}</button>)}
          </nav>
          <div className="ml-auto flex items-center pb-2">
            <Cell name="collapse" label="Collapse ribbon" width="w-6" /><Cell name="find" label="Search commands" width="w-[22px]" /><Cell name="learn" label="Learning" width="w-[26px]" />
            <Cell label="Learning menu" width="w-3"><Caret /></Cell><Cell name="help" label="Help" width="w-[26px]" />
          </div>
        </div>
      </header>

      <div className="flex border-b border-[#9d9d9d] bg-linear-to-b from-[#f9f9f9] from-[82px] to-[#efefef] to-[82px]">
        <Group title="Operations" width="w-[149px]">
          <Big icon="regenBig" label="Regenerate" width="w-[73px]" caret />
          <div><Small icon="copy" label="Copy" off /><Small icon="paste" label="Paste" off caret /><Small icon="del" label="Delete" off caret /></div>
        </Group>
        <Group title="Get Data" width="w-[146px]"><div className="pl-[7px]"><Small icon="udf" label="User-Defined Feature" /><Small icon="copyGeo" label="Copy Geometry" /></div></Group>
        <Group title="Datum" width="w-[175px]">
          <Big icon="planeBig" label="Plane" width="w-[46px]" />
          <div><Small icon="sketch" label="Sketch" /><Small icon="axis" label="Axis" /><Small icon="csys" label="Coordinate System" /></div>
        </Group>
        <Group title="Shapes" width="w-[202px]">
          <Big icon="flat" label="Flat" width="w-[46px]" /><Big icon="flange" label="Flange" width="w-10" />
          <div className="pl-1"><Small icon="extrude" label="Extrude" /><Small icon="planar" label="Planar" /><Small icon="blend" label="Boundary Blend" /></div>
        </Group>
        <Group title="Engineering" width="w-[183px]">
          <Big icon="rip" label="Rip" width="w-[45px]" caret /><Big icon="form" label="Form" width="w-9" caret />
          <div className="pl-1.5"><Small icon="corner" label="Corner Relief" /><Small icon="convert" label="Conversion" /></div>
        </Group>
        <Group title="Bends" width="w-[159px]">
          <Big icon="unbend" label="Unbend" width="w-[57px]" caret />
          <div><Small icon="bend" label="Bend" caret /><Small icon="bendBack" label="Bend Back" /><Small icon="flatPat" label="Flat Pattern" caret /></div>
        </Group>
        <Group title="Editing" width="w-[85px]"><div className="pl-[7px]"><Small icon="offset" label="Offset" /><Small icon="extend" label="Extend" off /><Small icon="split" label="Split Area" /></div></Group>
        <Group title="Surface" width="w-[61px]"><Big icon="fill" label="Fill" width="w-full" /></Group>
        <Group title="Model Intent" width="w-[90px]"><Big icon="family" label="Family Table" width="mx-auto w-11" /></Group>
      </div>

      <main className="flex flex-1 border-t border-b-2 border-t-[#bcbcbc] border-b-[#989898]">
        <aside className="flex w-[321px] shrink-0 flex-col border-r-2 border-[#9c9ca2]">
          <div className="flex h-7 bg-[#c0c1c1] text-[#777]">
            <button className="flex w-[98px] items-center gap-[7px] bg-[#efefef] pl-2 text-[#3c3c3c]"><Icon name="tree" />Model Tree</button>
            <button className="flex w-[119px] items-center gap-1 border border-[#aaa] bg-[#dadcdc] pl-2"><Icon name="folders" className="size-[18px]" />Folder Browser</button>
            <button className="flex w-[87px] items-center gap-1.5 border-y border-r border-[#aaa] bg-[#dadcdc] pl-2"><Icon name="fav" />Favorites</button>
          </div>
          <div className="flex h-[30px] items-center pr-2.5 pl-7">
            <h2 className="mr-auto font-bold">Model Tree</h2>
            <button aria-label="Settings" className="flex items-center gap-2"><Icon name="hammer" className="size-[18px]" /><Caret /></button>
            <button aria-label="Show" className="ml-2.5 flex items-center gap-1.5"><Icon name="page" className="size-[18px]" /><Caret /></button>
            <button aria-label="Hide tree" className="ml-3"><Icon name="treeOff" className="size-5" /></button>
          </div>
          <div className="flex h-[26px] items-center pl-3">
            <Icon name="filter" />
            <label className="ml-1 flex h-[26px] w-[238px] items-center border border-[#b9b9b9] bg-white">
              <input aria-label="Filter tree" className="min-w-0 flex-1 px-2 outline-none" />
              <button aria-label="Clear"><svg viewBox="0 0 16 16" className="mr-[3px] size-3"><path d="M3 3l10 10M13 3L3 13" stroke="#888" strokeWidth="1.500" /></svg></button>
            </label>
            <button aria-label="Filter options" className="ml-1.5"><Caret /></button>
            <button aria-label="Add filter" className="ml-2"><Icon name="plus" /></button>
          </div>
          <div className="mt-1 mr-1.5 mb-1 ml-2 flex-1 border-t border-[#c8c8c8] bg-white">
            <ul>
              <li className="flex h-5 items-center gap-[9px] pl-[3px]"><Icon name="part" />IOI.PRT</li>
              {treeRows.map(([icon, name, open]) => (
                <li key={name} className="flex h-5 items-center gap-[7px] pl-2">
                  <svg viewBox="0 0 8 8" className="size-2" aria-hidden="true">{open && <path d="M1 0v8l6-4z" fill="#858585" />}</svg>
                  <span className="flex items-center gap-[9px]"><Icon name={icon} />{name}</span>
                </li>
              ))}
            </ul>
          </div>
        </aside>
        <section className="relative flex min-w-0 flex-1 justify-center overflow-hidden bg-[#e9e9ed]">
          <Sink />
          <p className="absolute top-[35%] left-[8.5%] flex items-baseline leading-[58px] whitespace-nowrap text-[#f0efed] [text-shadow:1px_2px_1px_#45413c]">
            <span className="font-['Noto_Sans_CJK_SC',sans-serif] text-[56px] font-light">莫西网</span>
            <span className="font-['Liberation_Serif',serif] text-[53px]">www.3dmox.com</span>
          </p>
          <div className="relative mt-1.5 flex h-[31px] items-center self-start border border-[#a5a5a5] bg-[#f8f8f8] pr-1.5 pl-0.5">
            {viewTools.map(([icon, label, menu]) => (
              <button key={icon} aria-label={label} className={`relative mx-px flex size-6 items-center justify-center ${icon === "spin" ? "bg-[#d2d4d8] outline outline-[#9b9b9b]" : ""}`}>
                <Icon name={icon} />
                {menu && <svg viewBox="0 0 4 4" className="absolute right-0 bottom-0 size-1"><path d="M4 0v4H0z" fill="#444" /></svg>}
              </button>
            ))}
          </div>
        </section>
      </main>

      <footer>
        <div className="flex h-[34px] items-center border-t border-[#f8f8f8] pl-1.5">
          <button aria-label="Toggle tree" className="flex size-[22px] items-center justify-center border border-[#aaa] bg-[#dcdcdc]"><Icon name="tree" /></button>
          <Cell name="globe" label="Browser" width="w-[30px]" /><Cell name="square" label="Full screen" width="w-[22px]" />
          <span className="ml-[9px] h-6 w-px bg-[#a7a7a7]" />
          <div className="ml-auto flex h-full items-center">
            <span className="h-6 w-px bg-[#a7a7a7]" /><Cell name="layers" label="Regeneration status" width="w-[22px]" />
            <span className="ml-[21px] h-6 w-px bg-[#a7a7a7]" /><span className="ml-10 h-6 w-px bg-[#a7a7a7]" />
            <div className="mx-0.5 flex h-6 border border-[#b8b8b8] bg-[#fafafa]"><Cell name="bino" label="Find" width="w-[27px]" /><button aria-label="Find options" className="flex w-[15px] items-center justify-center border-l border-[#ccc]"><Caret /></button></div>
            <span className="h-6 w-px bg-[#a7a7a7]" />
            <div className="relative mr-[18px] ml-[90px] flex h-[23px] w-[165px]">
              <select aria-label="Selection filter" className="h-full w-full appearance-none border border-[#a7a7a7] bg-[#f8f8f8] pl-[7px]"><option>Geometry</option></select>
              <span className="pointer-events-none absolute inset-y-0 right-0 flex w-4 items-center justify-center border-l border-[#a7a7a7]"><Caret /></span>
            </div>
          </div>
        </div>
        <div className="flex h-10 items-stretch bg-[#292929] text-xs text-white">
          <Cell name="win" label="Start" width="w-12" />
          <label className="flex w-[344px] items-center bg-[#f2f2f2] pr-3 pl-[9px]">
            <span className="size-[21px] rounded-full border-[3px] border-black" />
            <input aria-label="Search" placeholder="Type here to search" className="ml-2.5 min-w-0 flex-1 text-sm text-[#333] outline-none placeholder:text-[#444]" />
            <Icon name="mic" className="size-[17px]" />
          </label>
          <Cell name="taskview" label="Task view" width="w-[50px]" />
          <TaskApp name="explorer" label="Explorer" /><TaskApp name="chrome" label="Chrome" state="border-[#76a9dc]" /><TaskApp name="sw" label="SolidWorks" />
          <TaskApp name="creo" label="Creo" state="border-[#76b9e8] bg-[#4d4d4d]" /><TaskApp name="ansys" label="Ansys" /><TaskApp name="max" label="3ds Max" /><TaskApp name="maya" label="Maya" />
          <button aria-label="Premiere" className="flex w-[49px] items-center justify-center pb-0.5"><span className="flex h-[21px] w-[22px] items-center justify-center border border-[#c497ee] bg-[#2b0836] text-[#d6a7f5]">Pr</span></button>
          <div className="ml-auto flex items-center">
            <Cell name="people" label="People" width="w-[46px]" /><Cell name="up" label="Hidden icons" width="w-6" /><Cell name="wifi" label="Network" width="w-6" /><Cell name="mute" label="Volume" width="w-6" /><Cell name="battery" label="Battery" width="w-6" />
            <span className="w-9 text-center text-[11px]">ENG</span>
            <time className="flex w-[72px] flex-col text-center text-[11px] leading-[18px]"><span>04:36 PM</span><span>05-09-2019</span></time>
            <Cell name="note" label="Notifications" width="w-10" />
            <span className="ml-2 h-full w-px bg-[#777]" /><span className="w-1" />
          </div>
        </div>
      </footer>
    </div>
  );
}
